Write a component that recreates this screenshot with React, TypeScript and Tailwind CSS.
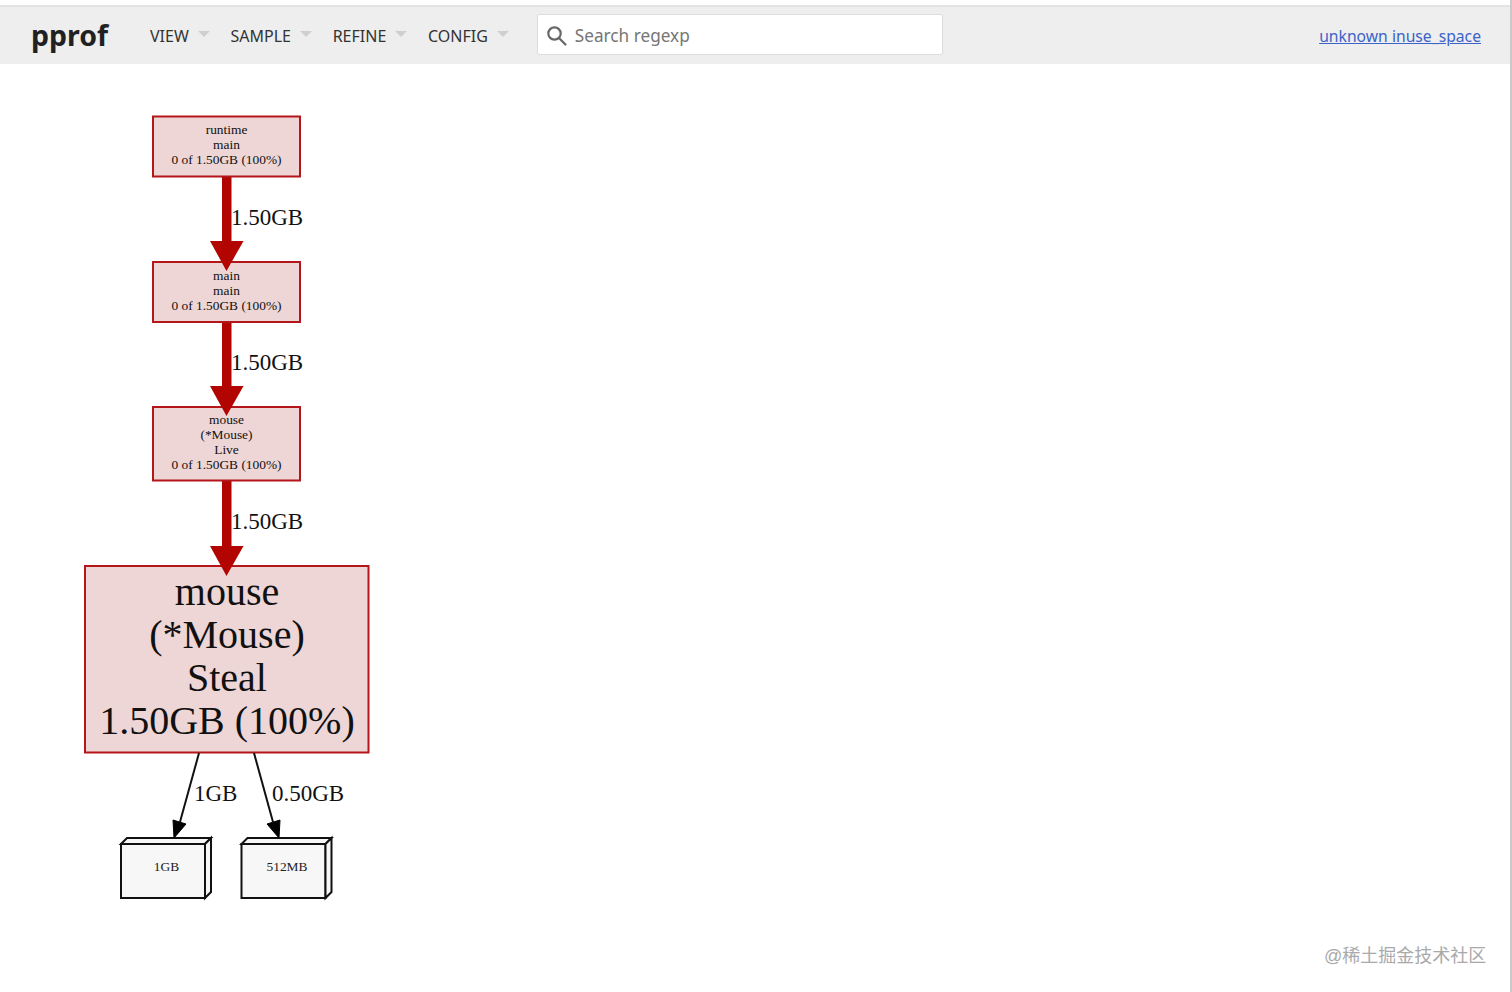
import React from "react";

const RED = "#b20400";
const BORDER = "#b5161a";
const FILL = "#edd6d5";

function Menu({ label }: { label: string }) {
  return (
    <div className="flex items-center">
      <span className="text-[16px] leading-none text-[#333]">{label}</span>
      <span className="ml-[9px] mb-[3px] h-0 w-0 border-x-[6px] border-t-[6px] border-x-transparent border-t-[#cfcfcf]" />
    </div>
  );
}

function Node({ y, h, lines }: { y: number; h: number; lines: string[] }) {
  const step = 15;
  const first = y + h / 2 - ((lines.length - 1) * step) / 2 + 2.5;
  return (
    <g>
      <rect x={153} y={y} width={147} height={h} fill={FILL} stroke={BORDER} strokeWidth={2} />
      {lines.map((l, i) => (
        <text key={i} x={226.5} y={first + i * step} textAnchor="middle" fontSize={13.4} fill="#111">
          {l}
        </text>
      ))}
    </g>
  );
}

function ThickEdge({ y1, y2, labelY }: { y1: number; y2: number; labelY: number }) {
  return (
    <g>
      <rect x={222} y={y1} width={9.5} height={y2 - y1 - 29} fill={RED} />
      <text x={231} y={labelY} fontSize={23} fill="#111">
        1.50GB
      </text>
    </g>
  );
}

function ArrowHead({ tip }: { tip: number }) {
  return <polygon points={`210,${tip - 30} 243.5,${tip - 30} 226.5,${tip}`} fill={RED} />;
}

function Box({ x, label }: { x: number; label: string }) {
  return (
    <g fill="#f7f7f7" stroke="#111" strokeWidth={2}>
      <rect x={x} y={844} width={84} height={54} />
      <polygon points={`${x},844 ${x + 6},838 ${x + 90},838 ${x + 84},844`} />
      <polygon points={`${x + 84},844 ${x + 90},838 ${x + 90},892 ${x + 84},898`} />
      <text x={x + 45.5} y={870.5} textAnchor="middle" fontSize={13.4} fill="#222" stroke="none">
        {label}
      </text>
    </g>
  );
}

export default function App() {
  return (
    <div className="relative h-[992px] w-[1512px] overflow-hidden bg-white font-['Noto_Sans','Open_Sans',sans-serif]">
      <div className="h-[5px] bg-white" />
      <header className="flex h-[59px] items-center border-t-2 border-[#e3e3e3] bg-[#eeeeee] pr-[31px]">
        <div className="ml-[31px] w-[119px] text-[28.5px] font-bold leading-none text-[#212121]">pprof</div>
        <div className="flex gap-[20.7px]">
          <Menu label="VIEW" />
          <Menu label="SAMPLE" />
          <Menu label="REFINE" />
          <Menu label="CONFIG" />
        </div>
        <div className="mb-[2px] ml-[28px] flex h-[41px] w-[406px] items-center rounded-[2px] border border-[#dddddd] bg-white pl-[8px] pt-[2px]">
          <svg width="22" height="22" viewBox="0 0 22 22" fill="none" stroke="#666" strokeWidth="2.2" className="shrink-0">
            <circle cx="8.5" cy="8.5" r="6.2" />
            <path d="M13 13l6.5 6.5" strokeLinecap="round" />
          </svg>
          <span className="ml-[7px] text-[17.2px] leading-none text-[#757575]">Search regexp</span>
        </div>
        <a className="ml-auto mt-[2px] text-[15.7px] leading-none text-[#3b63c9] underline">unknown inuse_space</a>
      </header>

      <svg width={1512} height={928} viewBox="0 64 1512 928" className="block font-['Liberation_Serif',serif]">
        <ThickEdge y1={177} y2={271} labelY={225} />
        <ThickEdge y1={322} y2={416} labelY={370} />
        <ThickEdge y1={481} y2={576} labelY={529} />

        <Node y={116.5} h={60} lines={["runtime", "main", "0 of 1.50GB (100%)"]} />
        <Node y={262} h={60} lines={["main", "main", "0 of 1.50GB (100%)"]} />
        <Node y={407} h={73.5} lines={["mouse", "(*Mouse)", "Live", "0 of 1.50GB (100%)"]} />

        <ArrowHead tip={271} />
        <ArrowHead tip={416} />

        <rect x={85} y={566} width={283.5} height={186.5} fill={FILL} stroke={BORDER} strokeWidth={2} />
        <ArrowHead tip={576} />
        {["mouse", "(*Mouse)", "Steal", "1.50GB (100%)"].map((l, i) => (
          <text key={l} x={227} y={605 + i * 43} textAnchor="middle" fontSize={40} fill="#111">
            {l}
          </text>
        ))}

        <line x1={199} y1={753} x2={180} y2={822} stroke="#111" strokeWidth={2} />
        <polygon points="173,820 186,824 174,838" fill="#000" stroke="#000" />
        <line x1={254} y1={753} x2={273} y2={822} stroke="#111" strokeWidth={2} />
        <polygon points="267,824 280,820 279,838" fill="#000" stroke="#000" />
        <text x={194} y={801} fontSize={23} fill="#111">1GB</text>
        <text x={272} y={801} fontSize={23} fill="#111">0.50GB</text>

        <Box x={121} label="1GB" />
        <Box x={241.5} label="512MB" />
      </svg>

      <div className="absolute right-0 top-0 h-full w-[2px] bg-[#c9c9c9]" />
      <div className="absolute left-[1324px] top-[944px] font-['Liberation_Sans','Noto_Sans_CJK_SC',sans-serif] text-[18px] leading-[24px] text-[#a9a9a9]">
        @稀土掘金技术社区
      </div>
    </div>
  );
}
